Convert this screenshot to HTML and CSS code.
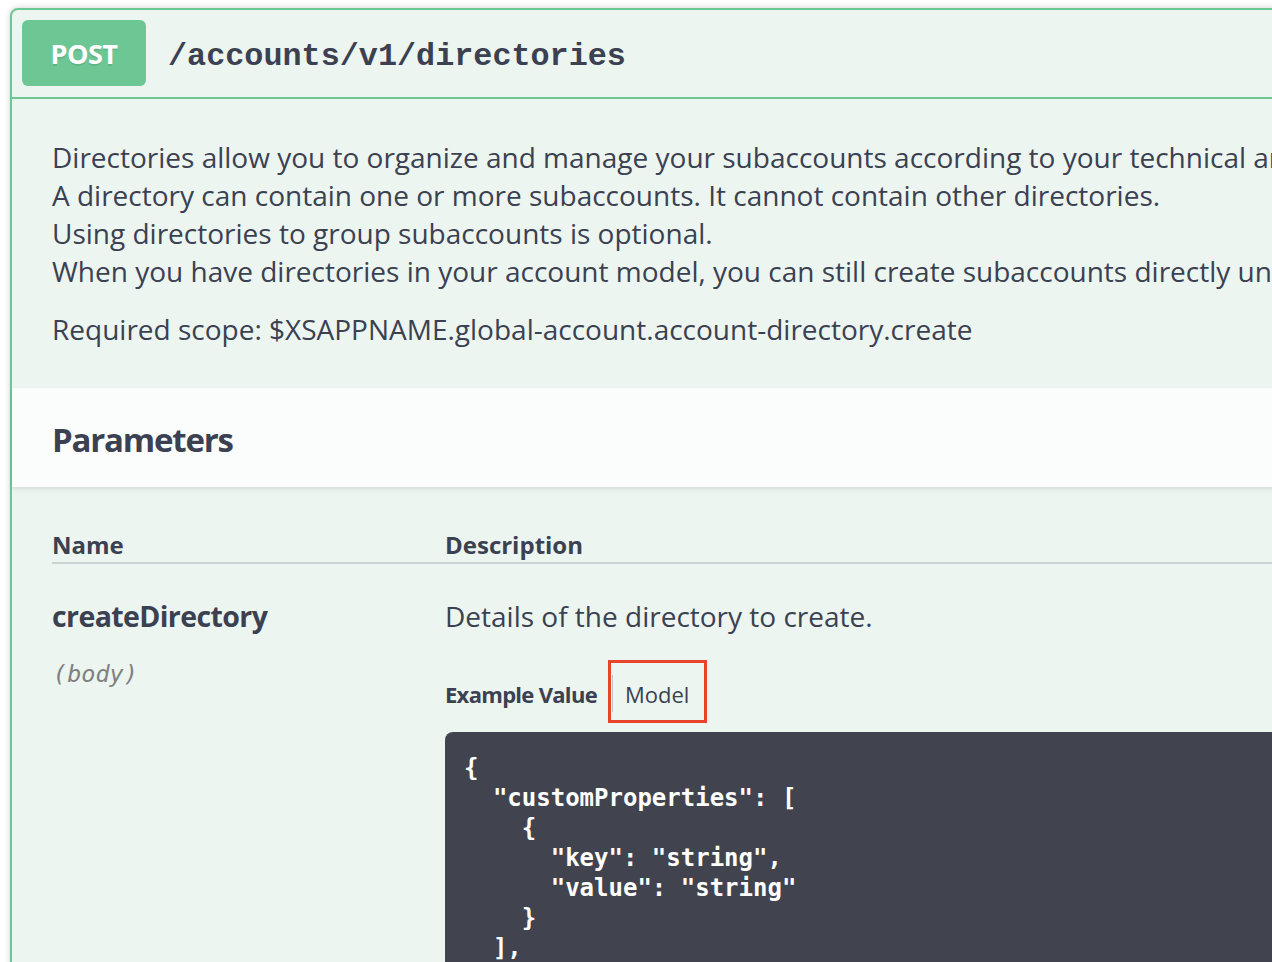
FILE: index.html
```html
<!DOCTYPE html>
<html lang="en">
<head>
<meta charset="utf-8">
<title>POST /accounts/v1/directories</title>
<link rel="stylesheet" href="styles.css">
</head>
<body>
<div class="page">
  <div class="opblock">
    <div class="summary">
      <span class="method">POST</span>
      <span class="path">/accounts/v1/directories</span>
    </div>
    <div class="description">
      <p class="lines">Directories allow you to organize and manage your subaccounts according to your technical and business needs.<br>A directory can contain one or more subaccounts. It cannot contain other directories.<br>Using directories to group subaccounts is optional.<br>When you have directories in your account model, you can still create subaccounts directly under your global account.</p>
      <p class="scope">Required scope: $XSAPPNAME.global-account.account-directory.create</p>
    </div>
    <div class="section-header">
      <h4 class="section-title">Parameters</h4>
    </div>
    <div class="params">
      <div class="params-head">
        <div class="col-name">Name</div>
        <div class="col-desc">Description</div>
      </div>
      <div class="param-row">
        <div class="col-name">
          <div class="param-name">createDirectory</div>
          <div class="param-in">(body)</div>
        </div>
        <div class="col-desc">
          <div class="param-text">Details of the directory to create.</div>
          <ul class="tabs">
            <li class="tab tab-active">Example Value</li>
            <li class="tab tab-model">Model<span class="highlight"></span></li>
          </ul>
          <pre class="code">{
  "customProperties": [
    {
      "key": "string",
      "value": "string"
    }
  ],
  "description": "string",
  "directoryAdmins": [
    "string"
  ],
  "directoryFeatures": [
    "DEFAULT"
  ],
  "displayName": "string"
}</pre>
        </div>
      </div>
    </div>
  </div>
</div>
</body>
</html>
```
FILE: styles.css
```css
html, body {
  margin: 0;
  padding: 0;
  background: #ffffff;
  width: 1272px;
  height: 962px;
  overflow: hidden;
}

.page {
  padding: 8px 0 0 10px;
}

.opblock {
  width: 1400px;
  border: 2px solid #6cc795;
  border-radius: 8px;
  background: #ecf5f0;
  box-shadow: 0 0 6px rgba(0, 0, 0, 0.19);
  color: #3b4151;
  font-family: "Open Sans", sans-serif;
}

.summary {
  display: flex;
  align-items: center;
  padding: 10px 10px 11px 10px;
  border-bottom: 2px solid #6cc795;
}

.method {
  display: flex;
  align-items: center;
  justify-content: center;
  width: 124px;
  height: 66px;
  border-radius: 6px;
  background: #6cc795;
  color: #ffffff;
  font-family: "Open Sans", sans-serif;
  font-weight: 700;
  font-size: 27px;
  font-stretch: 88%;
  letter-spacing: -0.5px;
  text-shadow: 0 2px 0 rgba(0, 0, 0, 0.1);
}

.path {
  margin: 8px 0 0 22px;
  font-family: "Liberation Mono", monospace;
  font-weight: 700;
  font-size: 31.8px;
  color: #3b4151;
}

.description {
  padding: 39px 40px 40px 40px;
  font-size: 28px;
  line-height: 38px;
  white-space: nowrap;
}

.description p {
  margin: 0;
}

.description .scope {
  margin-top: 20px;
}

.section-header {
  padding: 32px 40px 28px 40px;
  background: rgba(255, 255, 255, 0.8);
  box-shadow: 0 2px 4px rgba(0, 0, 0, 0.1);
  position: relative;
}

.section-title {
  margin: 0;
  font-size: 33px;
  line-height: 39px;
  font-weight: 700;
  font-stretch: 88%;
  letter-spacing: -1.2px;
}

.params {
  padding: 40px 40px 0 40px;
}

.params-head {
  display: flex;
  padding: 4px 0 3px 0;
  border-bottom: 2px solid #cdd2d3;
  font-size: 24px;
  line-height: 28px;
  font-weight: 700;
  font-stretch: 88%;
}

.col-name {
  width: 393px;
  flex: none;
}

.col-desc {
  flex: 1;
}

.param-row {
  display: flex;
  padding-top: 33px;
}

.param-name {
  font-size: 28.5px;
  line-height: 38px;
  font-weight: 700;
  font-stretch: 88%;
  letter-spacing: -0.6px;
}

.param-in {
  margin-top: 24px;
  padding-left: 1px;
  font-family: "DejaVu Sans Mono", monospace;
  font-style: italic;
  font-size: 23.5px;
  line-height: 30px;
  color: #808080;
}

.param-text {
  font-size: 28px;
  line-height: 38px;
}

.tabs {
  display: flex;
  align-items: center;
  height: 63px;
  margin: 25px 0 0 0;
  padding: 0;
  list-style: none;
  font-size: 24px;
  line-height: 30px;
}

.tab {
  height: 63px;
  display: flex;
  align-items: center;
  padding-top: 4px;
  box-sizing: border-box;
}

.tab-active {
  font-weight: 700;
  font-size: 22px;
  font-stretch: 88%;
  letter-spacing: -0.7px;
  padding-right: 15px;
}

.tab-model {
  position: relative;
  padding-left: 13px;
  padding-right: 18px;
  font-size: 22px;
  font-weight: 400;
}

.tab-model::before {
  content: "";
  position: absolute;
  left: 0;
  top: 15px;
  bottom: 11px;
  width: 1px;
  background: rgba(59, 65, 81, 0.25);
}

.highlight {
  position: absolute;
  top: 0;
  bottom: 0;
  left: -4px;
  right: 0;
  border: 3px solid #e8442a;
}

.code {
  margin: 9px 0 0 0;
  padding: 21px 19px;
  background: #41444e;
  border-radius: 8px 0 0 0;
  color: #ffffff;
  font-family: "DejaVu Sans Mono", monospace;
  font-weight: 700;
  font-size: 24px;
  line-height: 30px;
  height: 400px;
}
```
